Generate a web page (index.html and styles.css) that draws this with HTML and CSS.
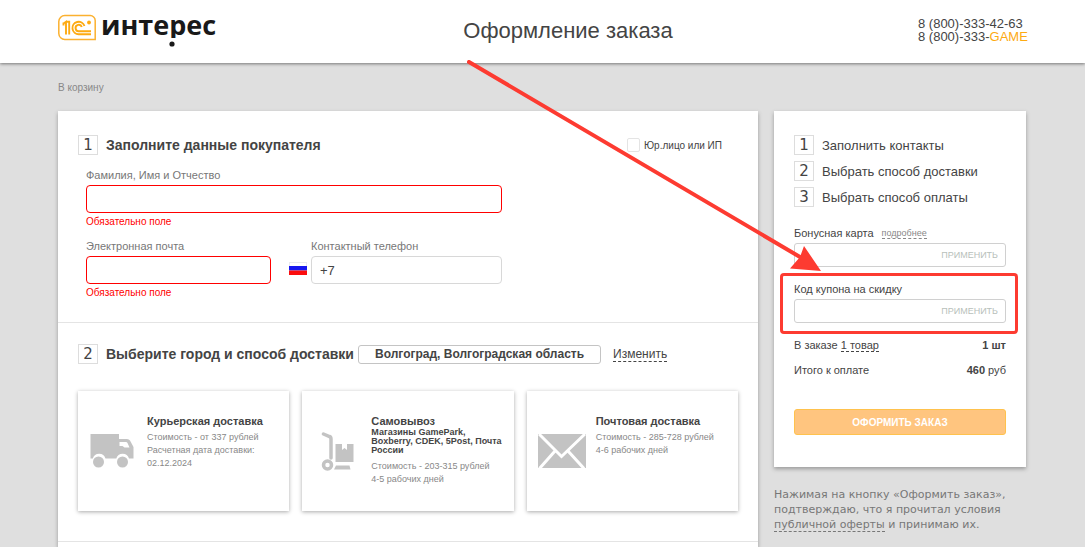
FILE: index.html
```html
<!DOCTYPE html>
<html lang="ru">
<head>
<meta charset="utf-8">
<meta name="viewport" content="width=device-width, initial-scale=1">
<title>Оформление заказа</title>
<link rel="stylesheet" href="styles.css">
</head>
<body>
<header class="header">
  <div class="wrap header-row">
    <a class="logo" href="#" aria-label="1С Интерес">
      <svg width="160" height="48" viewBox="0 0 160 48">
        <path d="M7 1.600H32A5 5 0 0 1 37.200 6.500V25.400H7A6 6 0 0 1 .8 19.500V7.500A6 6 0 0 1 7 1.600Z" fill="none" stroke="#fbb130" stroke-width="1.500"/>
        <g fill="none" stroke="#fdaa12" stroke-width="1.900">
          <path d="M5.500 9.500L8 7.800V20.500M5.500 11.500V8.600M8 7.800H11.200V20.500"/>
          <path d="M26.500 12A6.200 6.200 0 1 0 21 20.200H33"/>
          <path d="M23.800 13A3.200 3.200 0 1 0 21 17.200H33"/>
        </g>
        <circle cx="31" cy="8.500" r="1.900" fill="#fdaa12"/>
        <text class="logo-text" x="43" y="21">интерес</text>
        <path d="M106 24H121V36H106Z" fill="#fff"/>
        <circle cx="114" cy="30" r="2.600" fill="#191919"/>
      </svg>
    </a>
    <h1 class="title">Оформление заказа</h1>
    <div class="phones">8 (800)-333-42-63<br>8 (800)-333-<span class="accent">GAME</span></div>
  </div>
</header>

<main class="wrap page">
  <nav class="crumbs"><a href="#">В корзину</a></nav>
  <div class="columns">
    <form class="panel order">
      <section class="section buyer">
        <div class="head">
          <span class="num">1</span>
          <h2>Заполните данные покупателя</h2>
          <label class="legal"><input type="checkbox" class="check">Юр.лицо или ИП</label>
        </div>
        <div class="fields">
          <div class="field">
            <label for="name">Фамилия, Имя и Отчество</label>
            <input id="name" class="input invalid" type="text">
            <p class="error">Обязательно поле</p>
          </div>
          <div class="pair">
            <div class="field email">
              <label for="email">Электронная почта</label>
              <input id="email" class="input invalid" type="email">
              <p class="error">Обязательно поле</p>
            </div>
            <svg class="flag" width="18" height="13" viewBox="0 0 18 13">
              <path d="M0 0H18V4H0Z" fill="#e9e9ee"/><path d="M1 1H17V4H1Z" fill="#fff"/>
              <path d="M0 4H18V8.500H0Z" fill="#1717ef"/><path d="M0 8.500H18V13H0Z" fill="#fb0d0d"/>
            </svg>
            <div class="field tel">
              <label for="tel">Контактный телефон</label>
              <input id="tel" class="input" type="tel" value="+7">
            </div>
          </div>
        </div>
      </section>
      <section class="section delivery">
        <div class="head">
          <span class="num">2</span>
          <h2>Выберите город и способ доставки</h2>
          <span class="city">Волгоград, Волгоградская область</span>
          <a class="dashed change" href="#">Изменить</a>
        </div>
        <div class="cards">
          <article class="card">
            <svg class="icon" width="44" height="34" viewBox="0 0 44 34" fill="#c3c3c3">
              <path d="M0 0H28.500V5H36.500Q38.500 5 39.500 6.500L43 13V24.500H38.500A6.600 6.600 0 0 0 25.800 24.500H15A6.600 6.600 0 0 0 2.300 24.500H0Z"/>
              <path d="M29 8H35.500Q36.500 8 37 9L39 13.500H34L32 12H29Z" fill="#fff"/>
              <circle cx="8" cy="28" r="5.500"/><circle cx="32" cy="28" r="5.500"/>
            </svg>
            <div class="info">
              <h3>Курьерская доставка</h3>
              <p>Стоимость - от 337 рублей<br>Расчетная дата доставки:<br>02.12.2024</p>
            </div>
          </article>
          <article class="card">
            <svg class="icon" width="44" height="39" viewBox="0 0 44 39" fill="#c3c3c3">
              <path d="M9 2L15 4.500Q16.500 5 16.500 7V26" fill="none" stroke="#c3c3c3" stroke-width="3.500" stroke-linecap="round"/>
              <circle cx="13" cy="33" r="4" fill="none" stroke="#c3c3c3" stroke-width="3.500"/>
              <path d="M21 12H27.500V18L30 16L32.500 18V12H39V30H21ZM21.500 33.500H35L36 37.500H19.500Z"/>
            </svg>
            <div class="info">
              <h3>Самовывоз</h3>
              <p class="shops">Магазины GamePark, Boxberry, CDEK, 5Post, Почта России</p>
              <p>Стоимость - 203-315 рублей<br>4-5 рабочих дней</p>
            </div>
          </article>
          <article class="card">
            <svg class="icon wide" width="48" height="34" viewBox="0 0 48 34" fill="#c3c3c3">
              <path d="M0 0H48V34H0Z"/>
              <path d="M1 0L23.500 22.500L47 0M1.500 34.500L17 17M46 34.500L30 17" fill="none" stroke="#fff" stroke-width="3"/>
            </svg>
            <div class="info">
              <h3>Почтовая доставка</h3>
              <p>Стоимость - 285-728 рублей<br>4-6 рабочих дней</p>
            </div>
          </article>
        </div>
      </section>
    </form>

    <aside class="side">
      <div class="panel summary">
        <ol class="steps">
          <li><span class="num">1</span>Заполнить контакты</li>
          <li><span class="num">2</span>Выбрать способ доставки</li>
          <li><span class="num">3</span>Выбрать способ оплаты</li>
        </ol>
        <div class="code">
          <div class="code-head"><label for="bonus">Бонусная карта</label><a class="dashed more" href="#">подробнее</a></div>
          <div class="combo"><input id="bonus" type="text"><button type="button">ПРИМЕНИТЬ</button></div>
        </div>
        <div class="code coupon">
          <div class="code-head"><label for="coupon">Код купона на скидку</label></div>
          <div class="combo"><input id="coupon" type="text"><button type="button">ПРИМЕНИТЬ</button></div>
        </div>
        <div class="totals">
          <div class="row"><span>В заказе <a class="dashed" href="#">1 товар</a></span><b>1 шт</b></div>
          <div class="row"><span>Итого к оплате</span><span><b>460</b> руб</span></div>
        </div>
        <button class="submit" type="button">ОФОРМИТЬ ЗАКАЗ</button>
      </div>
      <p class="note">Нажимая на кнопку «Оформить заказ», подтверждаю, что я прочитал условия <a class="dashed" href="#">публичной оферты</a> и принимаю их.</p>
    </aside>
  </div>
  <svg class="arrow" width="356" height="214" viewBox="0 0 356 214">
    <path d="M2 2L333 197" stroke="#fd3b31" stroke-width="4" stroke-linecap="round"/>
    <path d="M354 211L323 208.500L333 197L337 186Z" fill="#fd3b31"/>
  </svg>
</main>
</body>
</html>
```

FILE: styles.css
```css
* { box-sizing: border-box; }
body {
  margin: 0;
  min-height: 100vh;
  display: flex;
  flex-direction: column;
  background: #dfdfdf;
  color: #444;
  font-family: "Liberation Sans", Arial, sans-serif;
  font-size: 11px;
}
h1, h2, h3, p, ol { margin: 0; padding: 0; }
a { color: inherit; text-decoration: none; }
input, button { font-family: inherit; }

.wrap { width: 100%; max-width: 1085px; margin: 0 auto; padding: 0 59px 0 58px; }

.header { background: #fff; box-shadow: 0 1px 3px #777; position: relative; }
.header-row { display: flex; justify-content: space-between; height: 63px; }
.logo { padding-top: 14px; }
.logo svg { display: block; overflow: visible; }
.logo-text { font: 700 27px "Open Sans", "Noto Sans", sans-serif; fill: #191919; }
.title { font-size: 22px; font-weight: 400; line-height: 62px; }
.phones { width: 108px; padding-top: 17px; font-size: 13px; line-height: 13px; white-space: nowrap; }
.accent { color: #fdaa12; }

.page { position: relative; flex: 1; display: flex; flex-direction: column; }
.crumbs { padding: 19px 0 17px; font-size: 10px; line-height: 12px; color: #888; }
.columns { flex: 1; display: grid; grid-template-columns: minmax(0, 1fr) 252px; gap: 16px; }
.panel { background: #fff; box-shadow: 0 2px 4px #999; }

.section { padding: 0 20px; border-bottom: 1px solid #e4e4e4; }
.buyer { padding-top: 24px; padding-bottom: 23px; }
.delivery { padding-top: 21px; padding-bottom: 30px; }
.head { display: flex; align-items: center; height: 20px; }
.head h2 { margin-left: 8px; font-size: 14px; line-height: 18px; white-space: nowrap; }
.num {
  flex: none;
  width: 20px;
  height: 20px;
  border: 1px solid #ddd;
  font: 15px/18px "DejaVu Sans", Verdana, sans-serif;
  text-align: center;
}
.legal { display: flex; align-items: center; gap: 4px; margin: 0 16px 0 auto; font-size: 10px; }
.check { appearance: none; width: 13px; height: 14px; margin: 0; border: 1px solid #e4e4e4; border-radius: 2px; background: #fff; }

.fields { padding: 13px 0 0 8px; max-width: 424px; }
.field { display: flex; flex-direction: column; }
.field label { color: #777; line-height: 14px; margin-bottom: 3px; }
.input { width: 100%; height: 28px; padding: 0 8px; border: 1px solid #d8d8d8; border-radius: 4px; background: #fff; color: #444; font-size: 13px; }
.invalid { border-color: #f00; }
.error { color: #f00; font-size: 10px; line-height: 12px; margin-top: 3px; }
.pair { display: flex; padding-top: 11px; }
.email { width: 185px; }
.tel { flex: 1; }
.flag { margin: 23px 4px 0 18px; }

.city {
  margin-left: 4px;
  padding: 0 16px;
  border: 1px solid #c4c4c4;
  border-radius: 3px;
  font-size: 12px;
  font-weight: 700;
  line-height: 17px;
  white-space: nowrap;
}
.dashed { border-bottom: 1px dashed; }
.change { margin-left: 12px; font-size: 12px; line-height: 14px; }

.cards { display: grid; grid-template-columns: repeat(3, minmax(0, 1fr)); gap: 13px; padding-top: 27px; }
.card { display: flex; min-height: 120px; padding-left: 12px; background: #fff; box-shadow: 0 1px 4px #aaa; }
.icon { flex: none; align-self: center; width: 45px; }
.card .wide { width: 48px; margin-left: -1px; margin-right: -2px; }
.info { padding: 23px 10px 0 12px; }
.info h3 { font-size: 11px; line-height: 14px; white-space: nowrap; }
.info p { margin-top: 3px; color: #888; font-size: 9px; line-height: 13px; }
.info .shops { margin: 0 0 5px; color: #444; font-weight: 700; line-height: 9px; }

.summary { padding: 24px 20px 32px; }
.steps { display: grid; gap: 6px; list-style: none; font-size: 13px; }
.steps li { display: flex; align-items: center; gap: 8px; height: 20px; }
.code { padding-top: 16px; }
.steps + .code { padding-top: 19px; }
.code-head { display: flex; align-items: center; gap: 8px; height: 14px; margin-bottom: 3px; }
.more { color: #888; font-size: 9px; line-height: 10px; }
.combo { display: flex; height: 24px; border: 1px solid #d0d0d0; border-radius: 3px; }
.combo input { flex: 1; min-width: 0; border: 0; padding: 0 8px; background: none; }
.combo button { border: 0; padding: 0 7px; background: none; color: #b8bfbb; font-size: 9px; }
.coupon { position: relative; padding-top: 15px; }
.coupon::after {
  content: "";
  position: absolute;
  inset: 6px -12px -11px -14px;
  border: 3px solid #fd3b31;
  border-radius: 4px;
  pointer-events: none;
}
.totals { display: grid; gap: 11px; padding-top: 15px; }
.row { display: flex; justify-content: space-between; line-height: 14px; }
.submit { display: block; width: 100%; height: 26px; margin-top: 32px; border: 1px solid #ffc24d; border-radius: 3px; background: #ffc57f; color: #fff; font-size: 10px; font-weight: 700; }
.note { padding-top: 20px; color: #777; font: 11px/15px "DejaVu Sans", Verdana, sans-serif; }
.arrow { position: absolute; left: 467px; top: -3px; fill: none; pointer-events: none; }
```
